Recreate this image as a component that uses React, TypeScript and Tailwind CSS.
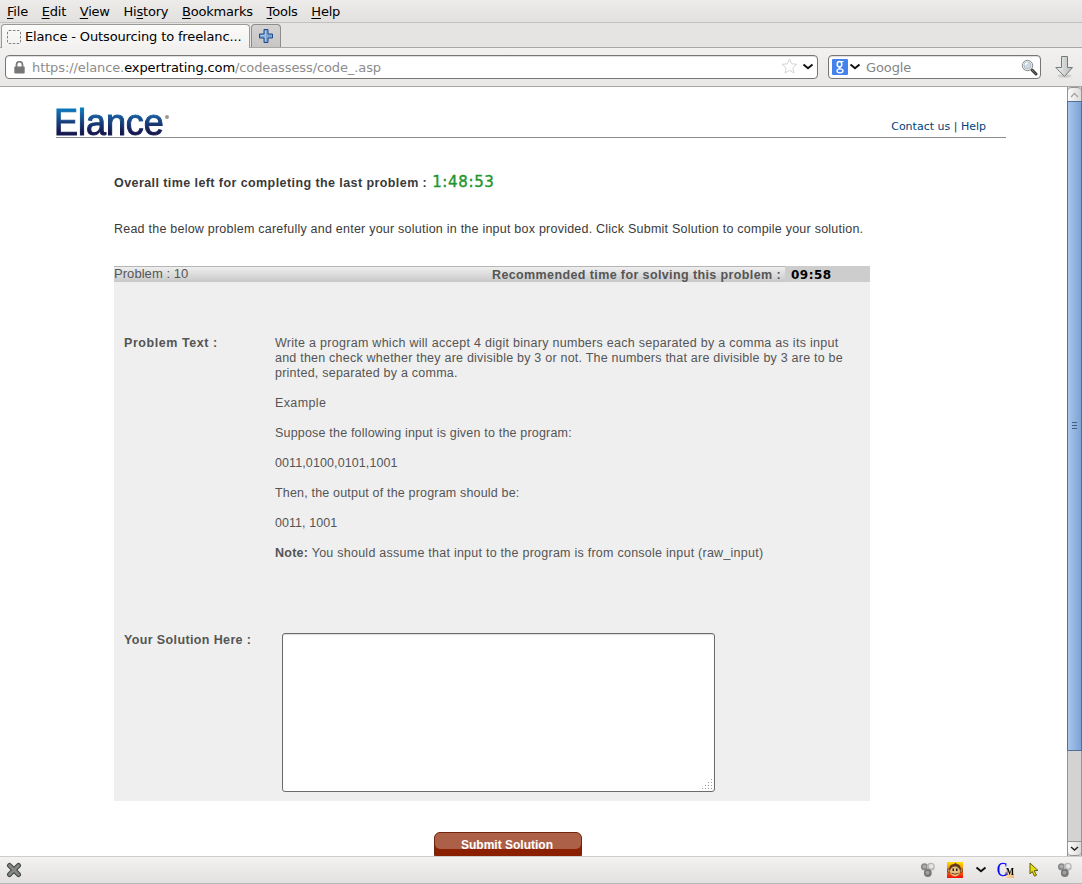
import type { ReactNode } from "react";

const menus: [string, string, string][] = [
  ["", "F", "ile"],
  ["", "E", "dit"],
  ["", "V", "iew"],
  ["Hi", "s", "tory"],
  ["", "B", "ookmarks"],
  ["", "T", "ools"],
  ["", "H", "elp"],
];

function Chevron({ color = "#111", className = "" }: { color?: string; className?: string }) {
  return (
    <svg width="12" height="8" viewBox="0 0 12 8" className={className}>
      <path d="M1.5 1.5 L6 5.2 L10.500 1.500" fill="none" stroke={color} strokeWidth="2" />
    </svg>
  );
}

function Gears() {
  return (
    <svg width="16" height="16" viewBox="0 0 16 16">
      <circle cx="4.500" cy="4.800" r="3.600" fill="#8b8b8b" />
      <circle cx="4.500" cy="4.500" r="1.700" fill="#adadad" />
      <circle cx="10.800" cy="4.800" r="4" fill="#b8b8b8" />
      <circle cx="11.200" cy="4.200" r="2.200" fill="#e6e6e6" />
      <circle cx="7.800" cy="11" r="3.900" fill="#777" />
      <circle cx="7.500" cy="10.700" r="1.900" fill="#a2a2a2" />
    </svg>
  );
}

function MenuBar() {
  return (
    <div className="flex h-[23px] shrink-0 items-center gap-[13.700px] border-b border-[#c3c1bf] bg-gradient-to-b from-[#edeceb] to-[#e3e1df] pl-[7px] pt-[2px] text-[13px] tracking-[-0.200px] text-black">
      {menus.map(([a, u, b]) => (
        <span key={a + u + b} className="leading-4">
          {a}
          <span className="underline underline-offset-2">{u}</span>
          {b}
        </span>
      ))}
    </div>
  );
}

function TabBar() {
  return (
    <div className="flex h-[25px] shrink-0 items-end border-b border-[#a9a7a5] bg-[#e6e4e2] pl-px">
      <div className="-mb-px flex h-[24px] w-[249px] items-center rounded-t-[4px] border border-b-0 border-[#9b9996] bg-gradient-to-b from-[#fbfbfa] to-[#f2f1f0] pl-[5px]">
        <svg width="14" height="14" viewBox="0 0 14 14" className="shrink-0">
          <rect x="0.500" y="0.500" width="13" height="13" rx="1.500" fill="none" stroke="#858585" strokeDasharray="2.500 1.500" />
        </svg>
        <span className="ml-1 whitespace-nowrap text-[13px] leading-5 tracking-[-0.140px] text-black">Elance - Outsourcing to freelanc...</span>
      </div>
      <div className="ml-px flex h-[23px] w-[30px] items-center justify-center rounded-t-[4px] border border-b-0 border-[#8e8c8a] bg-gradient-to-b from-[#d5d3d1] to-[#c8c6c4]">
        <svg width="14" height="14" viewBox="0 0 14 14">
          <path d="M5 .5h4v4.500h4.500v4H9v4.500H5V9H.5V5H5z" fill="#7ba6d5" stroke="#204a87" />
          <path d="M6.500 2v4.500H2M6.500 7v5" fill="none" stroke="#a9c8ea" />
        </svg>
      </div>
    </div>
  );
}

function NavBar() {
  return (
    <div className="flex h-[39px] shrink-0 items-center border-b border-[#a9a7a5] bg-gradient-to-b from-[#f2f1f0] to-[#eae8e7] pl-[5px] text-[13px]">
      <div className="flex h-[24px] w-[813px] items-center rounded-[4px] border border-[#787572] bg-white pl-[8px] pr-[3px] shadow-[inset_0_1px_1px_#ddd]">
        <svg width="11" height="13" viewBox="0 0 11 13" className="shrink-0">
          <path d="M2.500 6V3.700a3 3 0 0 1 6 0V6" fill="none" stroke="#7c7c7c" strokeWidth="1.800" />
          <rect x="0.300" y="5.500" width="10.400" height="7" rx="1" fill="#777" />
        </svg>
        <span className="ml-[7px] flex-1 whitespace-nowrap pt-[2px] leading-5 tracking-[-0.105px] text-[#8c8c8c]">
          https://elance.<span className="text-black">expertrating.com</span>/codeassess/code_.asp
        </span>
        <svg width="17" height="16" viewBox="0 0 17 16" className="-ml-px -mt-[2px] mr-px">
          <path d="M8.500 1l2.100 4.800 5.200.5-3.900 3.500 1.100 5.200-4.500-2.700L4 15l1.100-5.200L1.200 6.300l5.200-.5z" fill="#fff" stroke="#d4d4d4" />
        </svg>
        <Chevron className="ml-[3px]" />
      </div>
      <div className="ml-[10px] flex h-[24px] w-[213px] items-center rounded-[4px] border border-[#787572] bg-white pl-[3px] pr-[2px] shadow-[inset_0_1px_1px_#ddd]">
        <svg width="16" height="16" viewBox="0 0 16 16">
          <rect width="16" height="16" rx="1" fill="#4583ec" />
          <g fill="none" stroke="#fff">
            <ellipse cx="7.500" cy="5.200" rx="2.300" ry="2.700" strokeWidth="1.500" />
            <path d="M8 2.500h3.500M8.500 8c-2 1-1.500 1.400 0 2" strokeWidth="1.100" />
            <ellipse cx="8" cy="11.800" rx="3" ry="2" strokeWidth="1.300" />
          </g>
        </svg>
        <Chevron className="ml-px" />
        <span className="ml-[5px] flex-1 pt-[2px] leading-5 tracking-[-0.100px] text-[#858585]">Google</span>
        <svg width="17" height="17" viewBox="0 0 17 17">
          <path d="M11 11l4 4" stroke="#3c3c3c" strokeWidth="3" strokeLinecap="round" />
          <path d="M11 11l4 4" stroke="#999" strokeWidth="1" strokeDasharray="1 1" />
          <circle cx="6.500" cy="6.500" r="5.200" fill="#f4f6f8" stroke="#858886" />
          <circle cx="6.500" cy="6.500" r="3.600" fill="#cbd9e6" stroke="#aab2b8" strokeWidth="0.800" />
          <path d="M4.200 6.200a2.600 2.600 0 0 1 2.600-2.200" stroke="#fff" strokeWidth="1.400" fill="none" />
        </svg>
      </div>
      <svg width="20" height="24" viewBox="0 0 20 24" className="ml-[13px]">
        <defs>
          <linearGradient id="arrow" x1="0" x2="1">
            <stop offset="0" stopColor="#f4f5f4" />
            <stop offset="1" stopColor="#b4b8b6" />
          </linearGradient>
        </defs>
        <ellipse cx="10.500" cy="21" rx="7" ry="1.800" fill="#cfcecc" />
        <path d="M7.500 1.500h6v11h5L10.500 21.500 1.800 12.500h5.700z" fill="url(#arrow)" stroke="#747b80" strokeLinejoin="round" />
      </svg>
    </div>
  );
}

function Scrollbar() {
  return (
    <div className="flex w-[15px] shrink-0 flex-col border-x border-[#969492] bg-[#d4d3d1]">
      <div className="flex h-[14px] items-center justify-center rounded-t-[4px] border-t border-[#969492] bg-gradient-to-r from-[#fafafa] to-[#dedcda]">
        <svg width="9" height="6" viewBox="0 0 9 6"><path d="M1 5l3.500-3.500L8 5" fill="none" stroke="#a6a4a2" strokeWidth="1.300" /></svg>
      </div>
      <div className="-mx-px flex h-[650px] flex-col items-center justify-center gap-[2px] border border-[#4f7099] bg-gradient-to-r from-[#a9c6ea] to-[#7ba3d6] pb-[2px]">
        <div className="h-px w-[5px] bg-[#3f5f88]" />
        <div className="h-px w-[5px] bg-[#3f5f88]" />
        <div className="h-px w-[5px] bg-[#3f5f88]" />
      </div>
      <div className="flex-1" />
      <div className="flex h-[15px] items-center justify-center rounded-b-[4px] border-y border-[#969492] bg-gradient-to-r from-[#fafafa] to-[#dedcda]">
        <svg width="9" height="6" viewBox="0 0 9 6"><path d="M1 1l3.500 3L8 1" fill="none" stroke="#222" strokeWidth="1.500" /></svg>
      </div>
    </div>
  );
}

function Line({ children, track = "" }: { children?: ReactNode; track?: string }) {
  return <div className={"h-[15px] whitespace-nowrap leading-[15px] " + track}>{children}</div>;
}

function Problem() {
  return (
    <div className="mt-[29px] h-[535px] w-[756px] bg-[#efefef] text-[12.500px] text-[#555]">
      <div className="flex h-4 bg-[#cdcdcd]">
        <div className="flex h-4 w-[671px] justify-between border-t border-[#b5b5b5] bg-gradient-to-b from-[#efefef] to-[#c8c8c8] leading-[15px]">
          <span className="-mt-px text-[13px] tracking-[0.050px]">Problem : 10</span>
          <span className="mr-[4px] pt-px font-bold leading-[15px] tracking-[0.390px]">Recommended time for solving this problem :</span>
        </div>
        <span className="pl-[6px] font-['DejaVu_Sans',sans-serif] text-[12px] font-bold leading-[18px] tracking-[0.500px] text-black">09:58</span>
      </div>
      <div className="flex pt-[54px]">
        <div className="w-[161px] pl-[10px] font-bold leading-[15px] tracking-[0.550px]">Problem Text :</div>
        <div>
          <Line track="tracking-[0.280px]">Write a program which will accept 4 digit binary numbers each separated by a comma as its input</Line>
          <Line track="tracking-[0.220px]">and then check whether they are divisible by 3 or not. The numbers that are divisible by 3 are to be</Line>
          <Line track="tracking-[0.230px]">printed, separated by a comma.</Line>
          <Line />
          <Line track="tracking-[0.370px]">Example</Line>
          <Line />
          <Line track="tracking-[0.190px]">Suppose the following input is given to the program:</Line>
          <Line />
          <Line track="tracking-[0.100px]">0011,0100,0101,1001</Line>
          <Line />
          <Line track="tracking-[0.180px]">Then, the output of the program should be:</Line>
          <Line />
          <Line track="tracking-[0.050px]">0011, 1001</Line>
          <Line />
          <Line track="tracking-[0.250px]"><b>Note:</b> You should assume that input to the program is from console input (raw_input)</Line>
        </div>
      </div>
      <div className="flex pt-[72px]">
        <div className="w-[168px] pl-[10px] font-bold leading-[14px] tracking-[0.370px]">Your Solution Here :</div>
        <div className="flex h-[159px] w-[433px] items-end justify-end rounded-[3px] border border-[#6d6a68] bg-white p-px shadow-[inset_0_1px_1px_#ddd]">
          <svg width="11" height="11" viewBox="0 0 11 11" fill="#999">
            {[[9, 0], [6, 3], [9, 3], [3, 6], [6, 6], [9, 6], [0, 9], [3, 9], [6, 9], [9, 9]].map(([x, y]) => (
              <rect key={x + "-" + y} x={x} y={y} width="1" height="1" />
            ))}
          </svg>
        </div>
      </div>
    </div>
  );
}

function Page() {
  return (
    <div className="flex-1 overflow-hidden bg-white font-['Liberation_Sans',sans-serif]">
      <header className="ml-[56px] flex h-[51px] w-[950px] justify-between border-b border-[#8b8b8b] pt-[17px]">
        <div className="flex">
          <span className="-ml-[2px] bg-gradient-to-b from-[#0878bd] from-15% to-[#14184f] to-85% bg-clip-text text-[36px] leading-[38px] tracking-[-0.050px] text-transparent [-webkit-text-stroke:1px_transparent]">Elance</span>
          <span className="ml-px mt-[11px] h-[4px] w-[4px] rounded-full bg-[#999]" />
        </div>
        <div className="mr-[20px] mt-[15px] font-['DejaVu_Sans',sans-serif] text-[11px] leading-[15px] text-[#003f7d]">
          Contact us <span className="text-[#333]">|</span> Help
        </div>
      </header>
      <main className="ml-[114px]">
        <div className="flex items-baseline pt-[34px] text-[12.500px] font-bold leading-5 text-[#3a3a3a]">
          <span className="whitespace-nowrap tracking-[0.420px]">Overall time left for completing the last problem :</span>
          <span className="ml-[5px] font-['DejaVu_Sans',sans-serif] text-[15px] font-normal tracking-[0.650px] text-[#22962a] [-webkit-text-stroke:0.400px_#22962a]">1:48:53</span>
        </div>
        <p className="mt-[29px] whitespace-nowrap text-[12.500px] leading-[15px] tracking-[0.230px] text-[#3a3a3a]">
          Read the below problem carefully and enter your solution in the input box provided. Click Submit Solution to compile your solution.
        </p>
        <Problem />
        <div className="ml-[320px] mt-[31px] flex h-[28px] w-[148px] justify-center rounded-[6px] border border-[#71250d] bg-[#8b2000]">
          <div className="flex h-[16px] w-full justify-center rounded-[5px] bg-[#ad6048] pr-[2px] text-[12px] font-bold leading-[25px] text-white">
            Submit Solution
          </div>
        </div>
      </main>
    </div>
  );
}

function StatusBar() {
  return (
    <div className="flex h-[28px] shrink-0 items-center border-b border-t border-b-[#bbb9b7] border-t-[#cfcdcb] bg-gradient-to-b from-[#f3f2f1] to-[#e3e1df] pl-[6px] pr-[9px]">
      <svg width="16" height="16" viewBox="0 0 16 16">
        <path d="M3.500 3.500l9 9M12.500 3.500l-9 9" stroke="#444846" strokeWidth="5" strokeLinecap="round" />
        <path d="M3.500 3.500l9 9M12.500 3.500l-9 9" stroke="#858986" strokeWidth="2.800" strokeLinecap="round" />
      </svg>
      <div className="flex-1" />
      <Gears />
      <svg width="16" height="16" viewBox="0 0 16 16" className="ml-[11px]">
        <defs><linearGradient id="monkey" x1="0" y1="0" x2="0" y2="1"><stop stopColor="#ffe100" /><stop offset="1" stopColor="#f01010" /></linearGradient></defs>
        <rect width="16" height="16" fill="url(#monkey)" />
        <circle cx="2.200" cy="8.500" r="1.900" fill="#d9964f" stroke="#502c12" strokeWidth=".7" />
        <circle cx="13.800" cy="8.500" r="1.900" fill="#d9964f" stroke="#502c12" strokeWidth=".7" />
        <path d="M2.500 9C1.500 4 4 2.500 7 2l2-1.500.5 1.500c4 0 5 4 4 8-1 5-10 5-11-1z" fill="#613a1c" />
        <ellipse cx="8" cy="9.500" rx="5" ry="5" fill="#e9bd80" />
        <rect x="5.500" y="6.500" width="1.500" height="2.500" fill="#222" /><rect x="9" y="6.500" width="1.500" height="2.500" fill="#222" />
        <path d="M4.500 11.200q3.500 2 7 0" fill="none" stroke="#4b2508" strokeWidth=".8" />
      </svg>
      <Chevron className="ml-[12px]" />
      <div className="ml-[10px] flex h-4 w-[17px] items-end bg-[linear-gradient(135deg,#fff8e8,#f3b35c)] bg-[length:8px_8px] bg-[position:100%_100%] bg-no-repeat font-['Liberation_Serif',serif]">
        <span className="w-[9px] origin-left scale-x-[0.850] text-[18px] leading-[16px] text-[#0000ff] [-webkit-text-stroke:0.300px_#0000ff]">C</span>
        <span className="w-[8px] origin-left scale-x-[0.850] text-[10px] font-bold leading-[12px] text-black">M</span>
      </div>
      <svg width="12" height="16" viewBox="0 0 12 16" className="ml-[14px]">
        <path d="M2 1l8 7.500-3.800.2 2.300 4.500-2 1-2.300-4.700L2 12z" fill="#e6df00" stroke="#5f5d1a" strokeLinejoin="round" />
      </svg>
      <div className="ml-[17px]"><Gears /></div>
    </div>
  );
}

export default function App() {
  return (
    <div className="flex h-[884px] w-[1082px] flex-col overflow-hidden bg-white font-['DejaVu_Sans',sans-serif]">
      <MenuBar />
      <TabBar />
      <NavBar />
      <div className="flex min-h-0 flex-1">
        <Page />
        <Scrollbar />
      </div>
      <StatusBar />
    </div>
  );
}
